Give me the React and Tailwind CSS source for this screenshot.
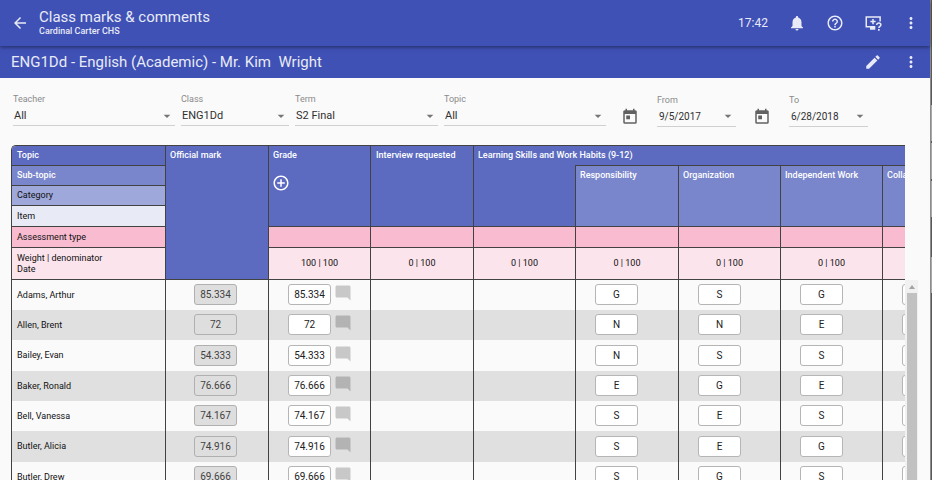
import { MdArrowBack, MdNotifications, MdHelpOutline, MdMoreVert, MdEdit, MdArrowDropDown, MdAddCircleOutline, MdModeComment } from "react-icons/md";

const students = [
  { name: "Adams, Arthur", mark: "85.334", skills: ["G", "S", "G", "G"] },
  { name: "Allen, Brent", mark: "72", skills: ["N", "N", "E", "G"] },
  { name: "Bailey, Evan", mark: "54.333", skills: ["N", "S", "S", "S"] },
  { name: "Baker, Ronald", mark: "76.666", skills: ["E", "G", "E", "G"] },
  { name: "Bell, Vanessa", mark: "74.167", skills: ["S", "E", "S", "E"] },
  { name: "Butler, Alicia", mark: "74.916", skills: ["S", "E", "G", "S"] },
  { name: "Butler, Drew", mark: "69.666", skills: ["S", "G", "S", "G"] },
];

const skillNames = ["Responsibility", "Organization", "Independent Work", "Collaboration"];
const skillColumns = ["overall", ...skillNames];

const line = "border-r border-b border-[#424242]";
const headText = "text-left align-top font-medium text-[9px] leading-[19px] text-white whitespace-nowrap";
const rowLabel = "pt-px pl-[5px] text-left font-normal";

function IconButton({ label, children }) {
  return (
    <button type="button" aria-label={label} className="flex size-[18px] items-center justify-center text-[#e8eaf6]">
      {children}
    </button>
  );
}

function ScreenHelpIcon() {
  return (
    <svg viewBox="0 0 24 24" className="size-[18px]" fill="none" stroke="currentColor" strokeWidth="2">
      <path d="M15 17H3V4h18.500v6" />
      <path d="M8 17h7v4H8z" fill="currentColor" stroke="none" />
      <path d="M12 6.500v7M8.500 10h7" />
      <path d="M17 14.500c0-3.300 5.500-3.200 5.500 0 0 1.900-2.700 1.900-2.700 4" />
      <path d="M18.700 20h2.200v2.200h-2.200z" fill="currentColor" stroke="none" />
    </svg>
  );
}

function CalendarIcon() {
  return (
    <svg viewBox="0 0 24 24" className="size-[18px]" fill="currentColor">
      <path d="M19 3h-1V1h-2v2H8V1H6v2H5a2 2 0 0 0-2 2v14a2 2 0 0 0 2 2h14a2 2 0 0 0 2-2V5a2 2 0 0 0-2-2zm0 16H5V8h14v11zM7 10h5v5H7z" />
    </svg>
  );
}

function SelectField({ id, label, value, className }) {
  return (
    <div className={className}>
      <label htmlFor={id} className="mb-[2px] block text-[9px] leading-[10px] text-[#8a8a8a]">{label}</label>
      <div className="grid h-5 items-center border-b border-[#d0d0d0]">
        <select id={id} defaultValue={value} className="col-start-1 row-start-1 w-full appearance-none bg-transparent pt-[2px] pl-px text-[11px] text-[#303030]">
          <option>{value}</option>
        </select>
        <MdArrowDropDown className="pointer-events-none col-start-1 row-start-1 size-4 justify-self-end text-[#757575]" />
      </div>
    </div>
  );
}

function DateField({ id, label, value }) {
  return (
    <div className="flex gap-[18px]">
      <button type="button" aria-label={"Open calendar: " + label} className="pt-3 text-[#616161]">
        <CalendarIcon />
      </button>
      <div className="w-[79px]">
        <label htmlFor={id} className="block text-[9px] leading-3 text-[#8a8a8a]">{label}</label>
        <div className="flex h-[21px] items-center border-b border-[#d0d0d0]">
          <input id={id} type="text" defaultValue={value} className="w-0 flex-1 bg-transparent pl-[2px] text-[10px] text-[#303030]" />
          <button type="button" aria-label={label + " options"} className="text-[#757575]">
            <MdArrowDropDown className="size-4" />
          </button>
        </div>
      </div>
    </div>
  );
}

function MarkBox({ label, value, readOnly }) {
  return (
    <input
      type="text"
      aria-label={label}
      defaultValue={value}
      readOnly={readOnly}
      className={
        "block h-[21px] w-[43px] rounded-[3px] border text-center text-[10px] " +
        (readOnly ? "border-[#b0b0b0] bg-[#dedede] text-[#424242]" : "border-[#b5b5b5] bg-white text-[#212121]")
      }
    />
  );
}

export default function App() {
  return (
    <div className="flex h-screen overflow-hidden bg-[#fafafa] font-['Roboto',sans-serif]">
      <div className="flex min-w-0 flex-1 flex-col">
        <header className="z-10 flex h-[46px] shrink-0 items-center bg-[#3f51b5] pr-[10px] pl-[11px] text-[#e8eaf6] shadow-[0_1px_4px_rgba(0,0,0,0.5)]">
          <IconButton label="Back"><MdArrowBack className="size-[18px]" /></IconButton>
          <div className="ml-[10px] flex-1">
            <h1 className="text-[15px] leading-[17px]">Class marks &amp; comments</h1>
            <p className="text-[9px] leading-[11px] font-medium">Cardinal Carter CHS</p>
          </div>
          <time className="mr-5 text-xs">17:42</time>
          <div className="flex gap-5">
            <IconButton label="Notifications"><MdNotifications className="size-[18px]" /></IconButton>
            <IconButton label="Help"><MdHelpOutline className="size-[18px]" /></IconButton>
            <IconButton label="Screen help"><ScreenHelpIcon /></IconButton>
            <IconButton label="More"><MdMoreVert className="size-[18px]" /></IconButton>
          </div>
        </header>

        <div className="flex h-8 shrink-0 items-center bg-[#3f51b5] pr-[10px] pl-[11px] text-[#e8eaf6]">
          <h2 className="flex-1 text-[15px] whitespace-pre">ENG1Dd - English (Academic) - Mr. Kim  Wright</h2>
          <div className="flex gap-5">
            <IconButton label="Edit"><MdEdit className="size-[18px]" /></IconButton>
            <IconButton label="More class actions"><MdMoreVert className="size-[18px]" /></IconButton>
          </div>
        </div>

        <main className="flex min-h-0 flex-1 flex-col pt-4 pr-3 pl-[11px]">
          <form className="mb-[18px] flex shrink-0 gap-[6px] pl-[2px]">
            <SelectField id="teacher" label="Teacher" value="All" className="w-[162px]" />
            <SelectField id="class" label="Class" value="ENG1Dd" className="w-[108px]" />
            <SelectField id="term" label="Term" value="S2 Final" className="w-[143px]" />
            <SelectField id="topic" label="Topic" value="All" className="w-[162px]" />
            <div className="ml-[9px] flex gap-[17px]">
              <DateField id="from" label="From" value="9/5/2017" />
              <DateField id="to" label="To" value="6/28/2018" />
            </div>
          </form>

          <div className="flex min-h-0 flex-1">
            <div className="min-w-0 flex-1 overflow-hidden rounded-tl-[5px] border-t border-l border-[#424242]">
              <table className="w-[974px] table-fixed border-separate border-spacing-0 text-[9px] text-[#111111]">
                <colgroup>
                  <col className="w-[154px]" />
                  <col className="w-[103px]" />
                  <col className="w-[102px]" />
                  <col className="w-[103px]" />
                  <col className="w-[102px]" />
                  <col className="w-[103px]" />
                  <col className="w-[102px]" />
                  <col className="w-[102px]" />
                  <col className="w-[103px]" />
                </colgroup>
                <thead>
                  <tr className="h-5">
                    <th scope="row" className={line + " " + headText + " bg-[#5c6bc0] pl-[5px]"}>Topic</th>
                    <th rowSpan={6} className={line + " " + headText + " bg-[#5c6bc0] pl-1"}>Official mark</th>
                    <th rowSpan={4} className={line + " " + headText + " bg-[#5c6bc0] pl-1"}>
                      Grade
                      <button type="button" aria-label="Add grade item" className="-ml-px mt-[9px] block">
                        <MdAddCircleOutline className="size-[18px]" />
                      </button>
                    </th>
                    <th rowSpan={4} className={line + " " + headText + " bg-[#5c6bc0] pl-[5px]"}>Interview requested</th>
                    <th colSpan={5} className={headText + " bg-[#5c6bc0]"}>
                      <div className="pl-1">Learning Skills and Work Habits (9-12)</div>
                      <div className="ml-[101px] border-b border-[#424242]" />
                    </th>
                  </tr>
                  <tr className="h-5">
                    <th scope="row" className={line + " " + headText + " bg-[#7986cb] pl-[5px]"}>Sub-topic</th>
                    <th rowSpan={3} aria-label="Overall" className={line + " bg-[#5c6bc0]"} />
                    {skillNames.map((name) => (
                      <th key={name} rowSpan={3} className={line + " " + headText + " bg-[#7986cb] pl-1"}>{name}</th>
                    ))}
                  </tr>
                  <tr className="h-5">
                    <th scope="row" className={line + " " + rowLabel + " bg-[#9fa8da]"}>Category</th>
                  </tr>
                  <tr className="h-[21px]">
                    <th scope="row" className={line + " " + rowLabel + " bg-[#e8eaf6]"}>Item</th>
                  </tr>
                  <tr className="h-[21px]">
                    <th scope="row" className={line + " " + rowLabel + " bg-[#f8bbd0]"}>Assessment type</th>
                    {["grade", "interview", ...skillColumns].map((name) => (
                      <td key={name} className={line + " bg-[#f8bbd0]"} />
                    ))}
                  </tr>
                  <tr className="h-8">
                    <th scope="row" className={line + " " + rowLabel + " bg-[#fce4ec] leading-[11px]"}>
                      Weight | denominator<br />Date
                    </th>
                    <td className={line + " bg-[#fce4ec] pt-px text-center"}>100 | 100</td>
                    {["interview", ...skillColumns].map((name) => (
                      <td key={name} className={line + " bg-[#fce4ec] pt-px text-center"}>0 | 100</td>
                    ))}
                  </tr>
                </thead>
                <tbody>
                  {students.map((student) => (
                    <tr key={student.name} className="h-[30px] even:bg-[#e0e0e0] nth-[3n]:h-[31px]">
                      <th scope="row" className={rowLabel + " border-r border-[#424242]"}>{student.name}</th>
                      <td className="border-r border-[#424242] pb-px pl-7">
                        <MarkBox label={student.name + " official mark"} value={student.mark} readOnly />
                      </td>
                      <td className="border-r border-[#424242] pb-px pl-[19px]">
                        <div className="flex items-start gap-[3px]">
                          <MarkBox label={student.name + " grade"} value={student.mark} />
                          <button type="button" aria-label={"Comment for " + student.name} className="text-black/20">
                            <MdModeComment className="size-[18px] -scale-x-100 -scale-y-100 rotate-180" />
                          </button>
                        </div>
                      </td>
                      <td className="border-r border-[#424242]" />
                      <td className="border-r border-[#424242]" />
                      {student.skills.map((skill, i) => (
                        <td key={skillNames[i]} className="border-r border-[#424242] pb-px pl-[19px]">
                          <MarkBox label={student.name + " " + skillNames[i]} value={skill} />
                        </td>
                      ))}
                    </tr>
                  ))}
                </tbody>
              </table>
            </div>
            <div className="mt-[135px] flex w-[13px] shrink-0 flex-col items-end bg-[#f1f1f1] pr-px">
              <div className="flex h-[13px] w-[10px] items-center justify-center">
                <svg viewBox="0 0 6 4" className="h-1 w-[6px] fill-[#a3a3a3]"><path d="M3 0l3 4H0z" /></svg>
              </div>
              <div className="w-[10px] flex-1 bg-[#c1c1c1]" />
            </div>
          </div>
        </main>
      </div>
      <div className="flex w-[2px] flex-col gap-[2px] border-l border-[#8c8c8c] bg-[#5a5a5a] pt-[105px]">
        <div className="h-9 bg-[#a8a8a8]" />
        <div className="h-9 bg-[#a8a8a8]" />
        <div className="h-9 bg-[#a8a8a8]" />
        <div className="mt-[38px] h-9 bg-[#a8a8a8]" />
      </div>
    </div>
  );
}
